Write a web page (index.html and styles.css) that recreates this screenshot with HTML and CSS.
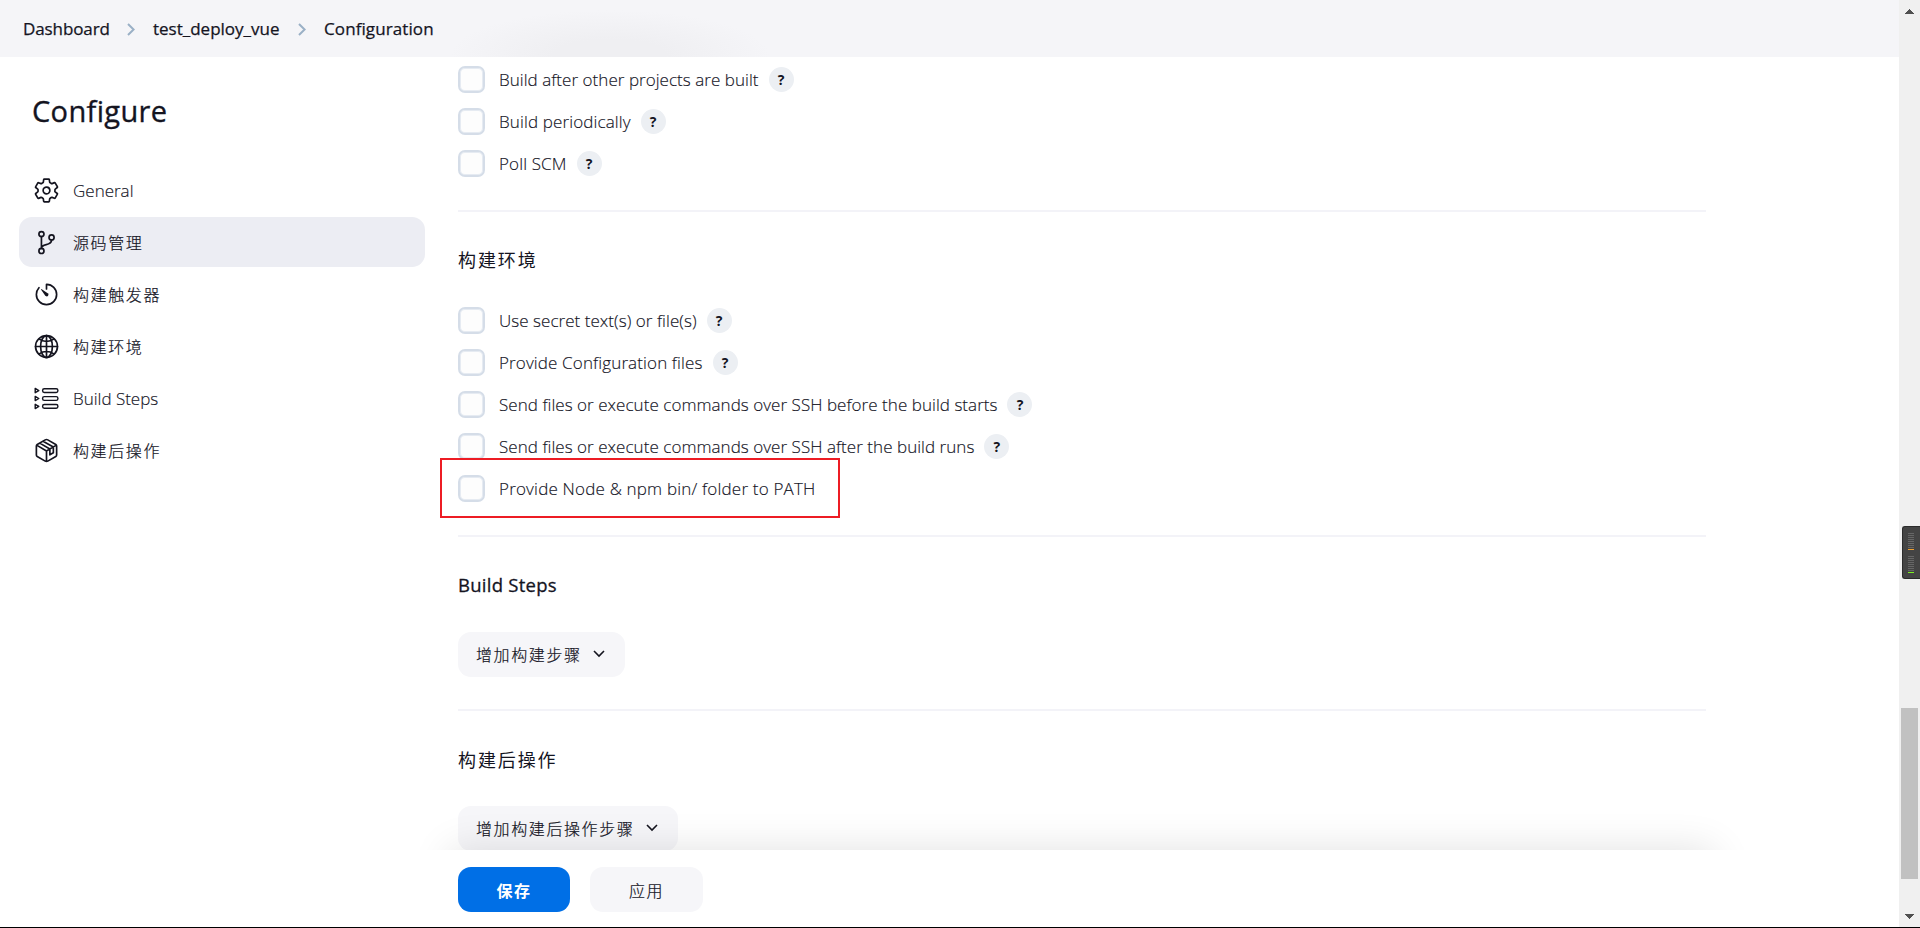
FILE: index.html
```html
<!DOCTYPE html>
<html lang="zh-CN">
<head>
<meta charset="utf-8">
<title>Configuration</title>
<link rel="stylesheet" href="styles.css">
</head>
<body>
<div class="window">
  <div class="page">
    <header class="crumbs">
      <div class="haze"></div>
      <span class="crumb c1">Dashboard</span>
      <svg class="sep" viewBox="0 0 8 13"><path d="M1 1l5.600 5.500L1 12"/></svg>
      <span class="crumb c2">test_deploy_vue</span>
      <svg class="sep" viewBox="0 0 8 13"><path d="M1 1l5.600 5.500L1 12"/></svg>
      <span class="crumb c3">Configuration</span>
    </header>
    <div class="body">
      <aside class="side">
        <h1>Configure</h1>
        <nav>
          <a class="item"><svg class="icon" viewBox="0 0 512 512"><path d="M262.290 192.310a64 64 0 1057.400 57.400 64.130 64.130 0 00-57.400-57.400zM416.390 256a154.340 154.340 0 01-1.530 20.790l45.210 35.460a10.810 10.810 0 012.450 13.750l-42.770 74a10.810 10.810 0 01-13.140 4.590l-44.900-18.080a16.110 16.110 0 00-15.170 1.750A164.480 164.480 0 01325 400.800a15.940 15.940 0 00-8.820 12.140l-6.730 47.890a11.080 11.080 0 01-10.680 9.170h-85.540a11.110 11.110 0 01-10.690-8.870l-6.720-47.820a16.070 16.070 0 00-9-12.220 155.300 155.300 0 01-21.460-12.570 16 16 0 00-15.110-1.710l-44.890 18.070a10.810 10.810 0 01-13.140-4.580l-42.770-74a10.800 10.800 0 012.450-13.750l38.210-30a16.050 16.050 0 006-14.080c-.36-4.170-.58-8.330-.58-12.500s.21-8.270.58-12.350a16 16 0 00-6.070-13.940l-38.190-30A10.810 10.810 0 0149.480 186l42.770-74a10.810 10.810 0 0113.140-4.590l44.900 18.080a16.110 16.110 0 0015.170-1.750A164.480 164.480 0 01187 111.200a15.940 15.940 0 008.820-12.140l6.730-47.890A11.080 11.080 0 01213.230 42h85.540a11.110 11.110 0 0110.690 8.870l6.720 47.820a16.070 16.070 0 009 12.220 155.300 155.300 0 0121.460 12.570 16 16 0 0015.110 1.710l44.890-18.070a10.810 10.810 0 0113.140 4.580l42.770 74a10.800 10.800 0 01-2.450 13.750l-38.210 30a16.050 16.050 0 00-6.050 14.080c.33 4.140.55 8.300.55 12.470z"/></svg><span class="en">General</span></a>
          <a class="item active"><svg class="icon" viewBox="0 0 512 512"><circle cx="160" cy="96" r="48"/><circle cx="160" cy="416" r="48"/><circle cx="352" cy="160" r="48"/><path d="M160 368V144M352 208c0 128-192 48-192 160"/></svg><span class="zh">源码管理</span></a>
          <a class="item"><svg class="icon" viewBox="0 0 512 512"><path d="M112.910 128A191.850 191.850 0 0064 254c-1.180 106.350 85.650 193.800 192 194 106.200.2 192-85.830 192-192 0-104.540-83.550-189.610-187.500-192a4.360 4.360 0 00-4.500 4.370V152"/><path class="solid" d="M233.380 278.630l-79-113a8.130 8.130 0 0111.320-11.320l113 79a32.500 32.500 0 01-37.250 53.260 33.210 33.210 0 01-8.070-7.940z"/></svg><span class="zh">构建触发器</span></a>
          <a class="item"><svg class="icon" viewBox="0 0 512 512"><circle cx="256" cy="256" r="208"/><ellipse cx="256" cy="256" rx="112" ry="208"/><path d="M117.300 117.300c38.200 27.200 86.400 43.400 138.700 43.400s100.400-16.200 138.700-43.400M394.700 394.700c-38.200-27.200-86.400-43.400-138.700-43.400s-100.400 16.200-138.700 43.400M256 48v416M464 256H48"/></svg><span class="zh">构建环境</span></a>
          <a class="item"><svg class="icon list" viewBox="0 0 512 512"><rect x="182" y="70" width="290" height="72" rx="32"/><rect x="182" y="220" width="290" height="72" rx="32"/><rect x="182" y="370" width="290" height="72" rx="32"/><path d="M42 66v80l68-40zM42 216v80l68-40zM42 366v80l68-40z"/></svg><span class="en">Build Steps</span></a>
          <a class="item"><svg class="icon" viewBox="0 0 512 512"><path d="M448 341.400V170.600A32 32 0 00432.100 143l-152-88.500a48 48 0 00-48.200 0L79.900 143A32 32 0 0064 170.600v170.800A32 32 0 0079.900 369l152 88.500a48 48 0 0048.200 0l152-88.500A32 32 0 00448 341.400zM69 154l187 110 187-110M256 464V264M128 116l192 112v110l66-38V190L190 80"/></svg><span class="zh">构建后操作</span></a>
        </nav>
      </aside>
      <main class="main">
        <section class="sec first">
          <div class="row"><i class="box"></i><span class="label l1">Build after other projects are built</span><b class="help">?</b></div>
          <div class="row"><i class="box"></i><span class="label l2">Build periodically</span><b class="help">?</b></div>
          <div class="row"><i class="box"></i><span class="label l3">Poll SCM</span><b class="help">?</b></div>
        </section>
        <section class="sec env">
          <h2 class="zhh">构建环境</h2>
          <div class="row"><i class="box"></i><span class="label l4">Use secret text(s) or file(s)</span><b class="help">?</b></div>
          <div class="row"><i class="box"></i><span class="label l5">Provide Configuration files</span><b class="help">?</b></div>
          <div class="row"><i class="box"></i><span class="label l6">Send files or execute commands over SSH before the build starts</span><b class="help">?</b></div>
          <div class="row"><i class="box"></i><span class="label l7">Send files or execute commands over SSH after the build runs</span><b class="help">?</b></div>
          <div class="row"><i class="box"></i><span class="label l8">Provide Node &amp; npm bin/ folder to PATH</span><div class="mark"></div></div>
        </section>
        <section class="sec build">
          <h2 class="enh">Build Steps</h2>
          <button class="btn w1"><span class="zh">增加构建步骤</span><svg class="chev" viewBox="0 0 12 8"><path d="M1 1l5 5 5-5"/></svg></button>
        </section>
        <section class="sec post">
          <h2 class="zhh">构建后操作</h2>
          <button class="btn w2"><span class="zh">增加构建后操作步骤</span><svg class="chev" viewBox="0 0 12 8"><path d="M1 1l5 5 5-5"/></svg></button>
        </section>
      </main>
    </div>
    <div class="shade"><div class="shade-src"></div></div>
    <footer class="actions">
      <button class="btn save"><span class="zh">保存</span></button>
      <button class="btn apply"><span class="zh">应用</span></button>
    </footer>
  </div>
  <div class="scroll">
    <svg class="arrow" viewBox="0 0 9 5"><path d="M4 0h1v1h1v1h1v1h1v1h1v1H0V4h1V3h1V2h1V1h1z"/></svg>
    <div class="thumb"></div>
    <svg class="arrow" viewBox="0 0 9 5"><path d="M0 0h9v1H8v1H7v1H6v1H5v1H4V4H3V3H2V2H1V1H0z"/></svg>
  </div>
  <div class="meter"><div class="bars"></div><div class="bars green"></div></div>
</div>
</body>
</html>
```

FILE: styles.css
```css
* { box-sizing: border-box; }
body { margin: 0; overflow: hidden; background: #fff; color: #14141f; font-family: "Open Sans", "Noto Sans CJK SC", sans-serif; }
.window { position: relative; display: flex; width: 1920px; height: 928px; border-bottom: 1px solid #000; overflow: hidden; }
.page { position: relative; display: flex; flex-direction: column; width: 1899px; height: 927px; }
.crumbs { position: relative; display: flex; align-items: center; flex: none; height: 57px; padding: 0 23px; background: #f5f5f8; overflow: hidden; }
.haze { position: absolute; left: 450px; top: 10px; width: 320px; height: 90px; background: radial-gradient(closest-side, #efeff2 35%, transparent); }
.crumb { position: relative; font-size: 17px; font-weight: 500; line-height: 24px; white-space: nowrap; -webkit-text-stroke: .25px #14141f; }
.c1 { width: 104px; letter-spacing: -.1px; }
.c2 { width: 145px; margin-left: 18px; }
.c3 { margin-left: 18px; letter-spacing: .1px; }
.sep { position: relative; width: 8px; height: 13px; margin-top: 2px; fill: none; stroke: #9ab0c6; stroke-width: 2; }
.body { display: flex; flex: 1; min-height: 0; }
.side { width: 458px; padding: 0 33px 0 19px; }
h1 { margin: 32px 0 32px 13px; font-size: 29px; line-height: 44px; font-weight: 500; letter-spacing: .35px; -webkit-text-stroke: .35px #14141f; }
.item { display: flex; align-items: center; gap: 13px; height: 50px; margin-bottom: 2px; padding-left: 14px; border-radius: 13px; }
.active { background: #ecedf3; }
.icon { width: 27px; height: 27px; fill: none; stroke: #14141f; stroke-width: 32; stroke-linecap: round; stroke-linejoin: round; }
.icon .solid { fill: #14141f; stroke: none; }
.icon.list { stroke-width: 27; }
.zh { font-family: "Noto Sans CJK SC", sans-serif; font-size: 16px; line-height: 24px; letter-spacing: 1.6px; font-weight: 300; white-space: nowrap; -webkit-text-stroke: .2px currentColor; }
.en { font-size: 17px; font-weight: 300; white-space: nowrap; -webkit-text-stroke: .15px #14141f; }
.main { width: 1248px; }
.sec { border-bottom: 2px solid #f3f3f8; }
.first { height: 155px; padding-top: 9px; }
.env { height: 325px; }
.build { height: 174px; }
.post { border: 0; }
.row { position: relative; display: flex; align-items: center; height: 27px; margin-bottom: 15px; }
.box { width: 27px; height: 27px; border: 2px solid #d5dde8; border-radius: 7px; background: #fdfdfd; box-shadow: inset 0 0 0 1px #e6ebf2; }
.label { margin-left: 14px; padding-top: 1px; font-size: 17px; font-weight: 300; line-height: 24px; white-space: nowrap; -webkit-text-stroke: .15px #14141f; }
.l1, .l4, .l6, .l7 { letter-spacing: .042px; }
.l2, .l3, .l5 { letter-spacing: .13px; }
.l8 { letter-spacing: .19px; }
.help { width: 25px; height: 25px; margin-left: 10px; border-radius: 50%; background: #eceff3; font-size: 14px; font-weight: 700; line-height: 25px; text-align: center; }
h2 { margin: 0; font-size: 18px; line-height: 24px; font-weight: 500; }
.enh { font-size: 18.5px; letter-spacing: .25px; -webkit-text-stroke: .3px #14141f; }
.zhh { font-family: "Noto Sans CJK SC", sans-serif; letter-spacing: 1.9px; font-weight: 400; }
.env h2 { padding: 35px 0 36px; }
.build h2, .post h2 { padding: 36px 0 35px; }
.mark { position: absolute; left: -18px; top: -17px; width: 400px; height: 60px; border: 2px solid #ed1c24; }
.btn { display: flex; align-items: center; height: 45px; padding: 0 18px 1px; border: 0; border-radius: 13px; background: #f6f6f9; color: #14141f; }
.w1 { width: 167px; }
.w2 { width: 220px; }
.chev { width: 12px; height: 8px; margin-left: auto; margin-right: 2px; fill: none; stroke: #14141f; stroke-width: 1.600; }
.shade { position: absolute; left: 408px; top: 800px; width: 1348px; height: 50px; overflow: hidden; pointer-events: none; }
.shade-src { position: absolute; left: 42px; top: 50px; width: 1264px; height: 60px; box-shadow: 0 0 40px rgba(0,0,0,.12); }
.actions { position: relative; display: flex; gap: 20px; flex: none; height: 77px; padding: 17px 0 0 458px; background: #fff; }
.actions .btn { justify-content: center; padding: 0; }
.save { width: 112px; }
.actions .save { background: #006fe6; color: #fff; }
.save .zh { font-weight: 700; -webkit-text-stroke: 0; }
.apply { width: 113px; }
.scroll { display: flex; flex-direction: column; align-items: center; width: 21px; padding: 9px 1px 8px 0; background: #f0f0f0; }
.arrow { width: 9px; height: 5px; fill: #505050; shape-rendering: crispEdges; }
.thumb { width: 17px; height: 171px; margin: 694px 0 35px; background: #c1c1c1; }
.meter { position: absolute; left: 1902px; top: 526px; width: 18px; height: 53px; padding: 6px 5px; border: 1px solid #2b2b2b; border-right: 0; border-radius: 3px 0 0 3px; background: #444; }
.bars { width: 6px; height: 17px; margin-bottom: 6px; border-bottom: 1px solid #f0a030; background: repeating-linear-gradient(#666 0 1px, transparent 1px 2px); background-clip: padding-box; }
.green { border-color: #7cf020; }
```
